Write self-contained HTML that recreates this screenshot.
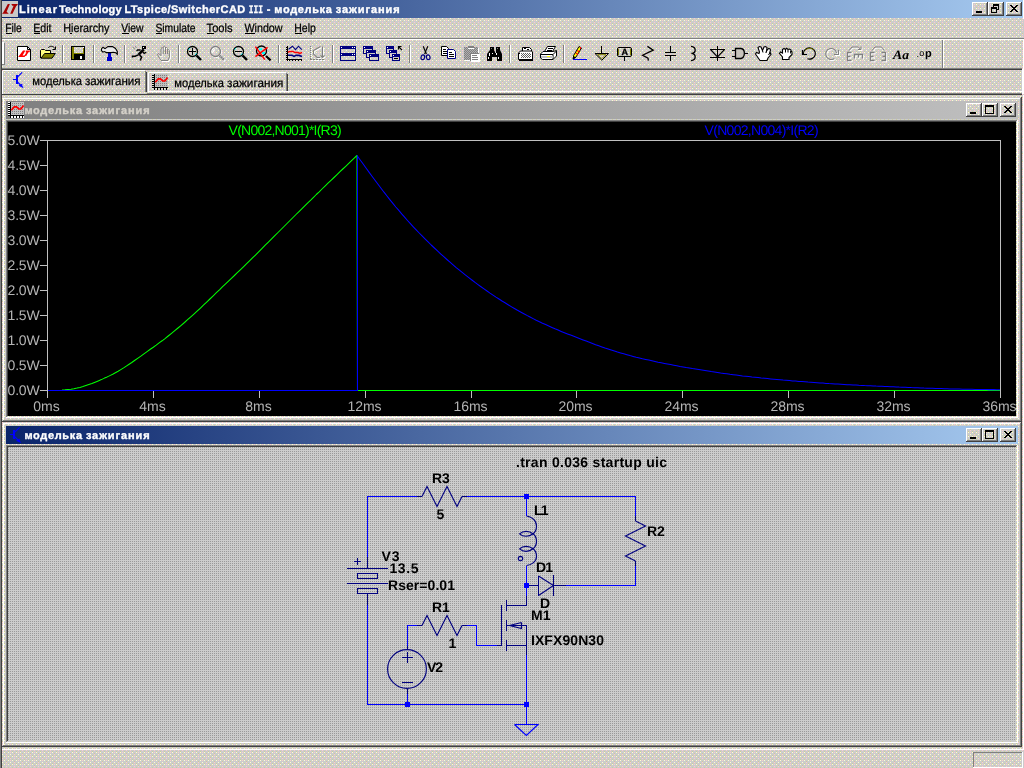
<!DOCTYPE html>
<html lang="ru"><head><meta charset="utf-8"><title>Linear Technology LTspice/SwitcherCAD III - моделька зажигания</title>
<style>
html,body{margin:0;padding:0;background:#d4d0c8}
body{width:1024px;height:768px;overflow:hidden;position:relative}
svg{position:absolute;left:0;top:0;display:block;will-change:transform}
svg text{font-family:"Liberation Sans",sans-serif;white-space:pre;text-rendering:geometricPrecision}
.ce{shape-rendering:crispEdges}
</style></head><body>
<svg width="1024" height="768" viewBox="0 0 1024 768">
<defs>
<linearGradient id="ga" x1="0" x2="1" y1="0" y2="0"><stop offset="0" stop-color="#0a246a"/><stop offset="1" stop-color="#a6caf0"/></linearGradient>
<linearGradient id="gi" x1="0" x2="1" y1="0" y2="0"><stop offset="0" stop-color="#808080"/><stop offset="1" stop-color="#c0c0c0"/></linearGradient>
<pattern id="bgp" width="8" height="8" patternUnits="userSpaceOnUse" shape-rendering="crispEdges"><rect width="8" height="8" fill="#cccccc"/><rect x="0" y="0" width="1" height="1" fill="#ffffcc"/><rect x="4" y="0" width="1" height="1" fill="#ffffcc"/><rect x="2" y="0" width="1" height="1" fill="#ffcccc"/><rect x="6" y="1" width="1" height="1" fill="#cccc99"/><rect x="2" y="2" width="1" height="1" fill="#ffffcc"/><rect x="6" y="2" width="1" height="1" fill="#ffcccc"/><rect x="0" y="3" width="1" height="1" fill="#cccc99"/><rect x="4" y="3" width="1" height="1" fill="#cccc99"/><rect x="0" y="4" width="1" height="1" fill="#ffffcc"/><rect x="4" y="4" width="1" height="1" fill="#ffffcc"/><rect x="6" y="4" width="1" height="1" fill="#ffcccc"/><rect x="2" y="5" width="1" height="1" fill="#cccc99"/><rect x="2" y="6" width="1" height="1" fill="#ffcccc"/><rect x="6" y="6" width="1" height="1" fill="#ffcccc"/><rect x="0" y="7" width="1" height="1" fill="#cccc99"/><rect x="4" y="7" width="1" height="1" fill="#cccc99"/></pattern><pattern id="scp" width="2" height="2" patternUnits="userSpaceOnUse" shape-rendering="crispEdges"><rect width="2" height="2" fill="#cccccc"/><rect x="0" y="1" width="1" height="1" fill="#999999"/></pattern><pattern id="gck" width="2" height="2" patternUnits="userSpaceOnUse" shape-rendering="crispEdges"><rect width="2" height="2" fill="#808080"/><rect x="0" y="0" width="1" height="1" fill="#b0b0b0"/><rect x="1" y="1" width="1" height="1" fill="#b0b0b0"/></pattern><pattern id="gck2" width="2" height="2" patternUnits="userSpaceOnUse" shape-rendering="crispEdges"><rect width="2" height="2" fill="#fff"/><rect x="0" y="0" width="1" height="1" fill="#606060"/><rect x="1" y="1" width="1" height="1" fill="#606060"/></pattern>
</defs>
<g class="ce">
<rect x="0" y="0" width="1024" height="768" fill="url(#bgp)"/>

<rect x="0" y="0" width="1" height="768" fill="#808080"/>
<rect x="1" y="0" width="1" height="768" fill="#404040"/>
<rect x="2" y="0" width="1021" height="18" fill="url(#ga)"/>
<rect x="1023" y="0" width="1" height="19" fill="#ffffff"/>
<rect x="972" y="2" width="16" height="14" fill="url(#bgp)"/>
<rect x="972" y="2" width="15" height="1" fill="#ffffff"/>
<rect x="972" y="2" width="1" height="13" fill="#ffffff"/>
<rect x="972" y="15" width="16" height="1" fill="#404040"/>
<rect x="987" y="2" width="1" height="14" fill="#404040"/>
<rect x="973" y="14" width="14" height="1" fill="#808080"/>
<rect x="986" y="3" width="1" height="12" fill="#808080"/>
<rect x="976" y="11" width="6" height="2" fill="#000"/>
<rect x="988" y="2" width="16" height="14" fill="url(#bgp)"/>
<rect x="988" y="2" width="15" height="1" fill="#ffffff"/>
<rect x="988" y="2" width="1" height="13" fill="#ffffff"/>
<rect x="988" y="15" width="16" height="1" fill="#404040"/>
<rect x="1003" y="2" width="1" height="14" fill="#404040"/>
<rect x="989" y="14" width="14" height="1" fill="#808080"/>
<rect x="1002" y="3" width="1" height="12" fill="#808080"/>
<rect x="993" y="4" width="6" height="6" fill="#000"/>
<rect x="994" y="6" width="4" height="3" fill="url(#bgp)"/>
<rect x="991" y="7" width="6" height="6" fill="#000"/>
<rect x="992" y="9" width="4" height="3" fill="url(#bgp)"/>
<rect x="1006" y="2" width="16" height="14" fill="url(#bgp)"/>
<rect x="1006" y="2" width="15" height="1" fill="#ffffff"/>
<rect x="1006" y="2" width="1" height="13" fill="#ffffff"/>
<rect x="1006" y="15" width="16" height="1" fill="#404040"/>
<rect x="1021" y="2" width="1" height="14" fill="#404040"/>
<rect x="1007" y="14" width="14" height="1" fill="#808080"/>
<rect x="1020" y="3" width="1" height="12" fill="#808080"/>
<rect x="1010" y="5" width="2" height="1" fill="#000"/>
<rect x="1016" y="5" width="2" height="1" fill="#000"/>
<rect x="1011" y="6" width="2" height="1" fill="#000"/>
<rect x="1015" y="6" width="2" height="1" fill="#000"/>
<rect x="1012" y="7" width="4" height="1" fill="#000"/>
<rect x="1013" y="8" width="2" height="1" fill="#000"/>
<rect x="1012" y="9" width="4" height="1" fill="#000"/>
<rect x="1011" y="10" width="2" height="1" fill="#000"/>
<rect x="1015" y="10" width="2" height="1" fill="#000"/>
<rect x="1010" y="11" width="2" height="1" fill="#000"/>
<rect x="1016" y="11" width="2" height="1" fill="#000"/>
<rect x="2" y="1" width="16" height="16" fill="#c8c8c8"/></g><g><path d="M7.8 4H9.9L6.6 11.7L8.8 13.7H2.1L3.4 12.3Z" fill="#a80000"/><path d="M11.3 4H18L16.8 5.7H16.3L12.5 13.7H10.2L13.6 5.7H12.3Z" fill="#a80000"/></g><g class="ce">
<rect x="2" y="38" width="1022" height="1" fill="#808080"/>
<rect x="2" y="39" width="1022" height="1" fill="#ffffff"/>
<rect x="2" y="42" width="1" height="22" fill="#ffffff"/>
<rect x="3" y="42" width="1" height="22" fill="#ffffff"/>
<rect x="4" y="43" width="1" height="22" fill="#808080"/>
<rect x="2" y="64" width="3" height="1" fill="#808080"/>
<rect x="62" y="45" width="1" height="18" fill="#808080"/>
<rect x="63" y="45" width="1" height="18" fill="#ffffff"/>
<rect x="93" y="45" width="1" height="18" fill="#808080"/>
<rect x="94" y="45" width="1" height="18" fill="#ffffff"/>
<rect x="124" y="45" width="1" height="18" fill="#808080"/>
<rect x="125" y="45" width="1" height="18" fill="#ffffff"/>
<rect x="178" y="45" width="1" height="18" fill="#808080"/>
<rect x="179" y="45" width="1" height="18" fill="#ffffff"/>
<rect x="278" y="45" width="1" height="18" fill="#808080"/>
<rect x="279" y="45" width="1" height="18" fill="#ffffff"/>
<rect x="332" y="45" width="1" height="18" fill="#808080"/>
<rect x="333" y="45" width="1" height="18" fill="#ffffff"/>
<rect x="409" y="45" width="1" height="18" fill="#808080"/>
<rect x="410" y="45" width="1" height="18" fill="#ffffff"/>
<rect x="509" y="45" width="1" height="18" fill="#808080"/>
<rect x="510" y="45" width="1" height="18" fill="#ffffff"/>
<rect x="563" y="45" width="1" height="18" fill="#808080"/>
<rect x="564" y="45" width="1" height="18" fill="#ffffff"/>
<rect x="942" y="40" width="1" height="28" fill="#808080"/>
<rect x="943" y="40" width="1" height="28" fill="#ffffff"/>
<rect x="2" y="68" width="1020" height="1" fill="#808080"/>
<rect x="2" y="69" width="1020" height="1" fill="#404040"/>
<rect x="1022" y="69" width="1" height="25" fill="#ffffff"/>
<rect x="1023" y="40" width="1" height="54" fill="#ffffff"/>
<rect x="2" y="91" width="1020" height="1" fill="#ffffff"/>
<rect x="148" y="72" width="140" height="19" fill="url(#bgp)"/>
<rect x="149" y="72" width="137" height="1" fill="#ffffff"/>
<rect x="148" y="73" width="1" height="18" fill="#ffffff"/>
<rect x="286" y="73" width="1" height="18" fill="#808080"/>
<rect x="287" y="74" width="1" height="17" fill="#404040"/>
<rect x="2" y="70" width="146" height="24" fill="url(#bgp)"/>
<rect x="3" y="70" width="142" height="1" fill="#ffffff"/>
<rect x="2" y="71" width="1" height="23" fill="#ffffff"/>
<rect x="145" y="71" width="1" height="22" fill="#808080"/>
<rect x="146" y="72" width="1" height="21" fill="#404040"/>
<rect x="2" y="93" width="1020" height="1" fill="#808080"/>
<rect x="2" y="94" width="1020" height="1" fill="#404040"/>
<rect x="2" y="92" width="145" height="2" fill="url(#bgp)"/>
<rect x="2" y="92" width="1" height="2" fill="#ffffff"/>
<rect x="147" y="93" width="875" height="1" fill="#808080"/>
<rect x="2" y="97" width="1020" height="325" fill="url(#bgp)"/>
<rect x="3" y="98" width="1018" height="1" fill="#ffffff"/>
<rect x="3" y="98" width="1" height="323" fill="#ffffff"/>
<rect x="2" y="421" width="1020" height="1" fill="#404040"/>
<rect x="1021" y="97" width="1" height="325" fill="#404040"/>
<rect x="3" y="420" width="1018" height="1" fill="#808080"/>
<rect x="1020" y="98" width="1" height="323" fill="#808080"/>
<rect x="6" y="101" width="1012" height="18" fill="url(#gi)"/>
<rect x="966" y="103" width="16" height="14" fill="url(#bgp)"/>
<rect x="966" y="103" width="15" height="1" fill="#ffffff"/>
<rect x="966" y="103" width="1" height="13" fill="#ffffff"/>
<rect x="966" y="116" width="16" height="1" fill="#404040"/>
<rect x="981" y="103" width="1" height="14" fill="#404040"/>
<rect x="967" y="115" width="14" height="1" fill="#808080"/>
<rect x="980" y="104" width="1" height="12" fill="#808080"/>
<rect x="970" y="112" width="6" height="2" fill="#000"/>
<rect x="982" y="103" width="16" height="14" fill="url(#bgp)"/>
<rect x="982" y="103" width="15" height="1" fill="#ffffff"/>
<rect x="982" y="103" width="1" height="13" fill="#ffffff"/>
<rect x="982" y="116" width="16" height="1" fill="#404040"/>
<rect x="997" y="103" width="1" height="14" fill="#404040"/>
<rect x="983" y="115" width="14" height="1" fill="#808080"/>
<rect x="996" y="104" width="1" height="12" fill="#808080"/>
<rect x="985" y="105" width="9" height="9" fill="#000"/>
<rect x="986" y="107" width="7" height="6" fill="url(#bgp)"/>
<rect x="1000" y="103" width="16" height="14" fill="url(#bgp)"/>
<rect x="1000" y="103" width="15" height="1" fill="#ffffff"/>
<rect x="1000" y="103" width="1" height="13" fill="#ffffff"/>
<rect x="1000" y="116" width="16" height="1" fill="#404040"/>
<rect x="1015" y="103" width="1" height="14" fill="#404040"/>
<rect x="1001" y="115" width="14" height="1" fill="#808080"/>
<rect x="1014" y="104" width="1" height="12" fill="#808080"/>
<rect x="1004" y="106" width="2" height="1" fill="#000"/>
<rect x="1010" y="106" width="2" height="1" fill="#000"/>
<rect x="1005" y="107" width="2" height="1" fill="#000"/>
<rect x="1009" y="107" width="2" height="1" fill="#000"/>
<rect x="1006" y="108" width="4" height="1" fill="#000"/>
<rect x="1007" y="109" width="2" height="1" fill="#000"/>
<rect x="1006" y="110" width="4" height="1" fill="#000"/>
<rect x="1005" y="111" width="2" height="1" fill="#000"/>
<rect x="1009" y="111" width="2" height="1" fill="#000"/>
<rect x="1004" y="112" width="2" height="1" fill="#000"/>
<rect x="1010" y="112" width="2" height="1" fill="#000"/>
<rect x="6" y="120" width="1012" height="1" fill="#808080"/>
<rect x="6" y="120" width="1" height="298" fill="#808080"/>
<rect x="7" y="121" width="1010" height="1" fill="#404040"/>
<rect x="7" y="121" width="1" height="296" fill="#404040"/>
<rect x="6" y="417" width="1012" height="1" fill="#ffffff"/>
<rect x="1017" y="120" width="1" height="298" fill="#ffffff"/>
<rect x="7" y="416" width="1010" height="1" fill="url(#bgp)"/>
<rect x="1016" y="121" width="1" height="296" fill="url(#bgp)"/>
<rect x="8" y="122" width="1008" height="294" fill="#000"/>
<rect x="2" y="422" width="1020" height="325" fill="url(#bgp)"/>
<rect x="3" y="423" width="1018" height="1" fill="#ffffff"/>
<rect x="3" y="423" width="1" height="323" fill="#ffffff"/>
<rect x="2" y="746" width="1020" height="1" fill="#404040"/>
<rect x="1021" y="422" width="1" height="325" fill="#404040"/>
<rect x="3" y="745" width="1018" height="1" fill="#808080"/>
<rect x="1020" y="423" width="1" height="323" fill="#808080"/>
<rect x="6" y="426" width="1012" height="18" fill="url(#ga)"/>
<rect x="966" y="428" width="16" height="14" fill="url(#bgp)"/>
<rect x="966" y="428" width="15" height="1" fill="#ffffff"/>
<rect x="966" y="428" width="1" height="13" fill="#ffffff"/>
<rect x="966" y="441" width="16" height="1" fill="#404040"/>
<rect x="981" y="428" width="1" height="14" fill="#404040"/>
<rect x="967" y="440" width="14" height="1" fill="#808080"/>
<rect x="980" y="429" width="1" height="12" fill="#808080"/>
<rect x="970" y="437" width="6" height="2" fill="#000"/>
<rect x="982" y="428" width="16" height="14" fill="url(#bgp)"/>
<rect x="982" y="428" width="15" height="1" fill="#ffffff"/>
<rect x="982" y="428" width="1" height="13" fill="#ffffff"/>
<rect x="982" y="441" width="16" height="1" fill="#404040"/>
<rect x="997" y="428" width="1" height="14" fill="#404040"/>
<rect x="983" y="440" width="14" height="1" fill="#808080"/>
<rect x="996" y="429" width="1" height="12" fill="#808080"/>
<rect x="985" y="430" width="9" height="9" fill="#000"/>
<rect x="986" y="432" width="7" height="6" fill="url(#bgp)"/>
<rect x="1000" y="428" width="16" height="14" fill="url(#bgp)"/>
<rect x="1000" y="428" width="15" height="1" fill="#ffffff"/>
<rect x="1000" y="428" width="1" height="13" fill="#ffffff"/>
<rect x="1000" y="441" width="16" height="1" fill="#404040"/>
<rect x="1015" y="428" width="1" height="14" fill="#404040"/>
<rect x="1001" y="440" width="14" height="1" fill="#808080"/>
<rect x="1014" y="429" width="1" height="12" fill="#808080"/>
<rect x="1004" y="431" width="2" height="1" fill="#000"/>
<rect x="1010" y="431" width="2" height="1" fill="#000"/>
<rect x="1005" y="432" width="2" height="1" fill="#000"/>
<rect x="1009" y="432" width="2" height="1" fill="#000"/>
<rect x="1006" y="433" width="4" height="1" fill="#000"/>
<rect x="1007" y="434" width="2" height="1" fill="#000"/>
<rect x="1006" y="435" width="4" height="1" fill="#000"/>
<rect x="1005" y="436" width="2" height="1" fill="#000"/>
<rect x="1009" y="436" width="2" height="1" fill="#000"/>
<rect x="1004" y="437" width="2" height="1" fill="#000"/>
<rect x="1010" y="437" width="2" height="1" fill="#000"/>
<rect x="6" y="445" width="1012" height="1" fill="#808080"/>
<rect x="6" y="445" width="1" height="298" fill="#808080"/>
<rect x="7" y="446" width="1010" height="1" fill="#404040"/>
<rect x="7" y="446" width="1" height="296" fill="#404040"/>
<rect x="6" y="742" width="1012" height="1" fill="#ffffff"/>
<rect x="1017" y="445" width="1" height="298" fill="#ffffff"/>
<rect x="7" y="741" width="1010" height="1" fill="url(#bgp)"/>
<rect x="1016" y="446" width="1" height="296" fill="url(#bgp)"/>
<rect x="8" y="447" width="1008" height="294" fill="url(#scp)"/>

<rect x="1022" y="95" width="1" height="654" fill="url(#bgp)"/>
<rect x="1023" y="95" width="1" height="654" fill="#ffffff"/>
<rect x="2" y="749" width="1022" height="1" fill="#ffffff"/>
<rect x="973" y="752" width="49" height="1" fill="#808080"/>
<rect x="973" y="752" width="1" height="15" fill="#808080"/>
<rect x="973" y="767" width="50" height="1" fill="#ffffff"/>
<rect x="1022" y="752" width="1" height="16" fill="#ffffff"/>
</g>
<g>
<text x="18.9" y="13" font-size="11" fill="#fff" textLength="38.1" lengthAdjust="spacing" font-weight="bold" stroke="#fff" stroke-width="0.35">Linear</text>
<text x="58.9" y="13" font-size="11" fill="#fff" textLength="62.7" lengthAdjust="spacing" font-weight="bold" stroke="#fff" stroke-width="0.35">Technology</text>
<text x="124.4" y="13" font-size="11" fill="#fff" textLength="120.9" lengthAdjust="spacing" font-weight="bold" stroke="#fff" stroke-width="0.35">LTspice/SwitcherCAD</text>
<text x="266.7" y="13" font-size="11" fill="#fff" textLength="5.7" lengthAdjust="spacing" font-weight="bold" stroke="#fff" stroke-width="0.35">-</text>
<text x="274.3" y="13" font-size="11" fill="#fff" textLength="57.6" lengthAdjust="spacing" font-weight="bold" stroke="#fff" stroke-width="0.35">моделька</text>
<text x="335.8" y="13" font-size="11" fill="#fff" textLength="63.8" lengthAdjust="spacing" font-weight="bold" stroke="#fff" stroke-width="0.35">зажигания</text>
<text x="248.7" y="13" font-size="11.5" fill="#fff" textLength="14.3" lengthAdjust="spacingAndGlyphs" font-weight="bold" style="font-family:'Liberation Mono',monospace" stroke="#fff" stroke-width="0.3">III</text>
<text x="5.2" y="32" font-size="12" fill="#000" textLength="16.7" lengthAdjust="spacingAndGlyphs" stroke="#000" stroke-width="0.25">File</text>
<text x="33.2" y="32" font-size="12" fill="#000" textLength="18.3" lengthAdjust="spacingAndGlyphs" stroke="#000" stroke-width="0.25">Edit</text>
<text x="63.2" y="32" font-size="12" fill="#000" textLength="46.3" lengthAdjust="spacingAndGlyphs" stroke="#000" stroke-width="0.25">Hierarchy</text>
<text x="121.2" y="32" font-size="12" fill="#000" textLength="22.2" lengthAdjust="spacingAndGlyphs" stroke="#000" stroke-width="0.25">View</text>
<text x="155.4" y="32" font-size="12" fill="#000" textLength="40.2" lengthAdjust="spacingAndGlyphs" stroke="#000" stroke-width="0.25">Simulate</text>
<text x="206.6" y="32" font-size="12" fill="#000" textLength="26.0" lengthAdjust="spacingAndGlyphs" stroke="#000" stroke-width="0.25">Tools</text>
<text x="244.4" y="32" font-size="12" fill="#000" textLength="38.2" lengthAdjust="spacingAndGlyphs" stroke="#000" stroke-width="0.25">Window</text>
<text x="294.3" y="32" font-size="12" fill="#000" textLength="21.5" lengthAdjust="spacingAndGlyphs" stroke="#000" stroke-width="0.25">Help</text>
<text x="32.2" y="85" font-size="12" fill="#000" textLength="49.9" lengthAdjust="spacingAndGlyphs" stroke="#000" stroke-width="0.25">моделька</text>
<text x="85.0" y="85" font-size="12" fill="#000" textLength="55.6" lengthAdjust="spacingAndGlyphs" stroke="#000" stroke-width="0.25">зажигания</text>
<text x="174.3" y="87" font-size="12" fill="#000" textLength="49.6" lengthAdjust="spacingAndGlyphs" stroke="#000" stroke-width="0.25">моделька</text>
<text x="227.1" y="87" font-size="12" fill="#000" textLength="56.2" lengthAdjust="spacingAndGlyphs" stroke="#000" stroke-width="0.25">зажигания</text>
<text x="24.4" y="114" font-size="11" fill="#d4d0c8" textLength="57.6" lengthAdjust="spacing" font-weight="bold" stroke="#d4d0c8" stroke-width="0.35">моделька</text>
<text x="85.9" y="114" font-size="11" fill="#d4d0c8" textLength="63.7" lengthAdjust="spacing" font-weight="bold" stroke="#d4d0c8" stroke-width="0.35">зажигания</text>
<text x="24.4" y="439" font-size="11" fill="#fff" textLength="57.6" lengthAdjust="spacing" font-weight="bold" stroke="#fff" stroke-width="0.35">моделька</text>
<text x="85.9" y="439" font-size="11" fill="#fff" textLength="63.7" lengthAdjust="spacing" font-weight="bold" stroke="#fff" stroke-width="0.35">зажигания</text>
</g>
<g class="ce" fill="#000">
<rect x="6" y="33" width="6" height="1"/>
<rect x="34" y="33" width="6" height="1"/>
<rect x="70" y="33" width="2" height="1"/>
<rect x="122" y="33" width="7" height="1"/>
<rect x="156" y="33" width="6" height="1"/>
<rect x="207" y="33" width="7" height="1"/>
<rect x="245" y="33" width="10" height="1"/>
<rect x="295" y="33" width="7" height="1"/>
</g>
<g class="ce"><g transform="translate(0 0)"><rect x="13" y="430" width="2" height="9" fill="#0000ff"/><rect x="10" y="434" width="3" height="1" fill="#0000ff"/></g>
<g transform="translate(2.5 -355)"><rect x="13" y="430" width="2" height="9" fill="#0000ff"/><rect x="10" y="434" width="3" height="1" fill="#0000ff"/></g></g>
<g><path d="M17.5 46.5H27.5L30.5 49.5V60.5H17.5Z" stroke="#000" stroke-width="1" fill="#fff"/>
<path d="M27.5 46.5V49.5H30.5" stroke="#000" stroke-width="1" fill="none"/>
<path d="M23 50.6H25.4L22.6 55.4H25.6L24.6 57H18.2Z" stroke="#ff0000" stroke-width="0" fill="#ff0000"/>
<path d="M26.2 50.6H30.2L29.4 52.2H28.4L26.2 56H24.2L26.4 52.2H25.4Z" stroke="#ff0000" stroke-width="0" fill="#ff0000"/>
<path d="M40.5 58V50.5L41.5 49.5H44.5L45.5 50.5H50.5V53" stroke="#000" stroke-width="1" fill="#ffff80"/>
<path d="M41 58.2L44.6 53.5H55.3L52 58.2Z" stroke="#000" stroke-width="1" fill="#808000"/>
<path d="M48.3 47.8C49.5 45.8 53.5 45.6 54.8 48.5" stroke="#000" stroke-width="1" fill="none"/>
<path d="M52.5 49.5H55.5V46.5" stroke="#000" stroke-width="1" fill="none"/>
<rect class="ce" x="71" y="46" width="14" height="14" fill="#000"/>
<rect class="ce" x="72" y="47" width="12" height="12" fill="#808000"/>
<rect class="ce" x="74" y="47" width="9" height="6" fill="url(#bgp)"/>
<rect class="ce" x="83" y="47" width="1" height="1" fill="#fff"/>
<rect class="ce" x="74" y="54" width="10" height="5" fill="#000"/>
<rect class="ce" x="80" y="56" width="2" height="3" fill="#fff"/>
<rect class="ce" x="108" y="52" width="3" height="5" fill="#0000d0"/>
<rect class="ce" x="107" y="57" width="5" height="4" fill="#0000d0"/>
<path d="M101.5 48.8L103 47.2L105 48.6L108 46.6H112.5L115.5 48.5L117.3 51.5V54.2L115.8 52.8L113.5 52.2L111 52.6H106.5L104.2 51.6L102.8 52.2L101.5 50.6Z" stroke="#000" stroke-width="1.1" fill="#e8e8e8"/>
<rect class="ce" x="142" y="46" width="4" height="3" fill="#000"/>
<rect class="ce" x="143" y="47" width="1" height="1" fill="#fff"/>
<path d="M143.8 49.3L138.6 54.6" stroke="#000" stroke-width="2.6" fill="none"/>
<path d="M140.6 50L137.6 49.9L136.6 51" stroke="#000" stroke-width="1.3" fill="none"/>
<path d="M142.8 52L144.2 53.4L146.2 52.2" stroke="#000" stroke-width="1.3" fill="none"/>
<path d="M138.8 54.6L135.2 56.3L132.5 56.3L132.5 57.6" stroke="#000" stroke-width="1.5" fill="none"/>
<path d="M139.6 55L141.6 57.2L140.6 59.4L140.4 60.6" stroke="#000" stroke-width="1.5" fill="none"/>
<path d="M132.8 47.2L134.8 49" stroke="#808080" stroke-width="1" fill="none"/>
<path d="M135 46.3L136.6 47.8" stroke="#808080" stroke-width="1" fill="none"/>
<path d="M161 60.5L157.5 54.5L158.8 53.5L161 55.8V48.5L162.2 47.5L163.2 48.5V47L164.4 46.2L165.5 47V48L166.6 47.4L167.6 48.4V49.8L168.6 49.6L169.4 50.6V57L168 60.5Z" stroke="#fff" stroke-width="1" fill="none" transform="translate(1 1)"/>
<path d="M161 60.5L157.5 54.5L158.8 53.5L161 55.8V48.5L162.2 47.5L163.2 48.5V47L164.4 46.2L165.5 47V48L166.6 47.4L167.6 48.4V49.8L168.6 49.6L169.4 50.6V57L168 60.5Z" stroke="#808080" stroke-width="1" fill="none"/>
<path d="M163.2 48.5V54M165.5 48V54M167.6 49.8V54" stroke="#808080" stroke-width="1" fill="none"/>
<circle cx="192.5" cy="51.5" r="5" stroke="#000" stroke-width="1.3" fill="none"/>
<path d="M188.6 49.6A4 4 0 0 1 190.2 48M196.4 53.4A4 4 0 0 1 194.8 55" stroke="#00ffff" stroke-width="1" fill="none"/>
<rect class="ce" x="189" y="51" width="7" height="1" fill="#000"/>
<rect class="ce" x="192" y="48" width="1" height="7" fill="#000"/>
<path d="M196.5 55.5L201 60" stroke="#000" stroke-width="2.4" fill="none"/>
<circle cx="216.3" cy="52.3" r="5" stroke="#fff" stroke-width="1.2" fill="none"/>
<circle cx="215.5" cy="51.5" r="5" stroke="#808080" stroke-width="1.3" fill="none"/>
<path d="M212.4 52.6L214.6 49.4" stroke="#fff" stroke-width="1.2" fill="none"/>
<path d="M220.4 56.6L225 61.2" stroke="#fff" stroke-width="2.4" fill="none"/>
<path d="M219.6 55.6L224.2 60.2" stroke="#808080" stroke-width="2.4" fill="none"/>
<path d="M220.2 57.2L221.8 55.6M221.8 58.8L223.4 57.2M223.4 60.4L225 58.8" stroke="#fff" stroke-width="0.7" fill="none"/>
<circle cx="238.5" cy="51.5" r="5" stroke="#000" stroke-width="1.3" fill="none"/>
<path d="M234.6 49.6A4 4 0 0 1 236.2 48M242.4 53.4A4 4 0 0 1 240.8 55" stroke="#00ffff" stroke-width="1" fill="none"/>
<rect class="ce" x="235" y="51" width="7" height="1" fill="#000"/>
<path d="M242.5 55.5L247 60" stroke="#000" stroke-width="2.4" fill="none"/>
<circle cx="261.5" cy="51" r="5" stroke="#000" stroke-width="1.3" fill="none"/>
<path d="M259 48.2h3v2h-3zM262 52h3v2h-3z" stroke="#00ffff" stroke-width="0" fill="#00ffff"/>
<path d="M266 56L270.6 60.4" stroke="#000" stroke-width="2.2" fill="none"/>
<path d="M255.4 46.6L264.8 59.6" stroke="#ff0000" stroke-width="1.5" fill="none"/>
<path d="M267.6 47.3L255.4 56.6" stroke="#ff0000" stroke-width="1.5" fill="none"/>
<rect class="ce" x="287" y="46" width="1" height="15" fill="#000"/>
<rect class="ce" x="286" y="59" width="16" height="1" fill="#000"/>
<rect class="ce" x="286" y="47" width="1" height="1" fill="#000"/>
<rect class="ce" x="286" y="49" width="1" height="1" fill="#000"/>
<rect class="ce" x="286" y="51" width="1" height="1" fill="#000"/>
<rect class="ce" x="286" y="53" width="1" height="1" fill="#000"/>
<rect class="ce" x="286" y="55" width="1" height="1" fill="#000"/>
<rect class="ce" x="286" y="57" width="1" height="1" fill="#000"/>
<rect class="ce" x="289" y="60" width="1" height="1" fill="#000"/>
<rect class="ce" x="292" y="60" width="1" height="1" fill="#000"/>
<rect class="ce" x="295" y="60" width="1" height="1" fill="#000"/>
<rect class="ce" x="298" y="60" width="1" height="1" fill="#000"/>
<rect class="ce" x="301" y="60" width="1" height="1" fill="#000"/>
<path d="M288.5 49.3L292.5 46.2L295.5 49.6L298.5 46.2L301.8 49.6" stroke="#000080" stroke-width="1.1" fill="none"/>
<path d="M288 52.2L290 51.4L293 51.4L295 52.6L298 52.6L300 53.4L302 52.4" stroke="#ff0000" stroke-width="1.5" fill="none"/>
<path d="M288 55.3L292 55.3L294 56.4L296 55.4L299 55.4L302 56.4" stroke="#000080" stroke-width="1.6" fill="none"/>
<path d="M310.5 46V60" stroke="#fff" stroke-width="1" fill="none" transform="translate(1 1)" stroke-dasharray="1 1"/>
<path d="M310 59.5H325" stroke="#fff" stroke-width="1" fill="none" transform="translate(1 1)" stroke-dasharray="2 1"/>
<path d="M320.5 46.5L313.5 50.5V54L317 57.5H320" stroke="#fff" stroke-width="1.1" fill="none" transform="translate(1 1)"/>
<path d="M322.5 46.5V57.5M320.5 55.5L322.5 57.5L324.5 55.5" stroke="#fff" stroke-width="1.1" fill="none" transform="translate(1 1)"/>
<path d="M310.5 46V60" stroke="#808080" stroke-width="1" fill="none" transform="translate(0 0)" stroke-dasharray="1 1"/>
<path d="M310 59.5H325" stroke="#808080" stroke-width="1" fill="none" transform="translate(0 0)" stroke-dasharray="2 1"/>
<path d="M320.5 46.5L313.5 50.5V54L317 57.5H320" stroke="#808080" stroke-width="1.1" fill="none" transform="translate(0 0)"/>
<path d="M322.5 46.5V57.5M320.5 55.5L322.5 57.5L324.5 55.5" stroke="#808080" stroke-width="1.1" fill="none" transform="translate(0 0)"/>
<rect class="ce" x="340" y="46" width="16" height="15" fill="#000080"/>
<rect class="ce" x="341" y="49" width="14" height="4" fill="url(#bgp)"/>
<rect class="ce" x="341" y="56" width="14" height="4" fill="url(#bgp)"/>
<rect class="ce" x="341" y="47" width="1" height="1" fill="#fff"/>
<rect class="ce" x="352" y="47" width="1" height="1" fill="#fff"/>
<rect class="ce" x="354" y="47" width="1" height="1" fill="#fff"/>
<rect class="ce" x="341" y="54" width="1" height="1" fill="#fff"/>
<rect class="ce" x="352" y="54" width="1" height="1" fill="#fff"/>
<rect class="ce" x="354" y="54" width="1" height="1" fill="#fff"/>
<rect class="ce" x="363" y="46" width="10" height="8" fill="#000080"/>
<rect class="ce" x="364" y="49" width="8" height="4" fill="url(#bgp)"/>
<rect class="ce" x="364" y="47" width="1" height="1" fill="#fff"/>
<rect class="ce" x="366" y="50" width="10" height="8" fill="#000080"/>
<rect class="ce" x="367" y="53" width="8" height="4" fill="url(#bgp)"/>
<rect class="ce" x="367" y="51" width="1" height="1" fill="#fff"/>
<rect class="ce" x="369" y="54" width="10" height="7" fill="#000080"/>
<rect class="ce" x="370" y="57" width="8" height="3" fill="url(#bgp)"/>
<rect class="ce" x="370" y="55" width="1" height="1" fill="#fff"/>
<rect class="ce" x="386" y="46" width="8" height="8" fill="#000080"/>
<rect class="ce" x="387" y="49" width="6" height="4" fill="url(#bgp)"/>
<rect class="ce" x="387" y="47" width="1" height="1" fill="#fff"/>
<rect class="ce" x="389" y="50" width="8" height="8" fill="#000080"/>
<rect class="ce" x="390" y="53" width="6" height="4" fill="url(#bgp)"/>
<rect class="ce" x="390" y="51" width="1" height="1" fill="#fff"/>
<rect class="ce" x="392" y="54" width="8" height="7" fill="#000080"/>
<rect class="ce" x="393" y="57" width="6" height="3" fill="url(#bgp)"/>
<rect class="ce" x="393" y="55" width="1" height="1" fill="#fff"/>
<rect class="ce" x="394" y="58" width="4" height="1" fill="#000"/>
<path d="M398 46.5H401.5M398.5 46V49.5M398.8 46.8L402 50.2" stroke="#000" stroke-width="1.2" fill="none"/>
<path d="M423.2 46.2L426.4 54" stroke="#000" stroke-width="1.15" fill="none"/>
<path d="M427.8 46.2L424.6 54" stroke="#000" stroke-width="1.15" fill="none"/>
<ellipse cx="422.8" cy="57.2" rx="1.8" ry="2.4" stroke="#000080" stroke-width="1.2" fill="none" transform="rotate(12 422.8 57.2)"/>
<ellipse cx="428.2" cy="57.2" rx="1.8" ry="2.4" stroke="#000080" stroke-width="1.2" fill="none" transform="rotate(-12 428.2 57.2)"/>
<path d="M441.5 46.5H446.5L448.5 48.5V55.5H441.5Z" stroke="#000" stroke-width="1" fill="#fff"/>
<rect class="ce" x="443" y="49" width="3" height="1" fill="#000"/>
<rect class="ce" x="443" y="51" width="4" height="1" fill="#000"/>
<rect class="ce" x="443" y="53" width="4" height="1" fill="#000"/>
<path d="M447.5 49.5H453.5L455.5 51.5V58.5H447.5Z" stroke="#000080" stroke-width="1" fill="#fff"/>
<rect class="ce" x="449" y="52" width="3" height="1" fill="#000"/>
<rect class="ce" x="449" y="54" width="5" height="1" fill="#000"/>
<rect class="ce" x="449" y="56" width="5" height="1" fill="#000"/>
<rect class="ce" x="465" y="48" width="14" height="13" rx="1" fill="#fff"/>
<rect class="ce" x="464" y="47" width="14" height="13" rx="1" fill="url(#gck)"/>
<rect class="ce" x="468" y="46" width="6" height="2" fill="#808080"/>
<rect class="ce" x="468" y="48" width="6" height="1" fill="#fff"/>
<rect class="ce" x="471" y="54" width="9" height="8" fill="#fff"/>
<rect class="ce" x="470" y="53" width="9" height="8" fill="#fff"/>
<rect class="ce" x="470" y="53" width="1" height="8" fill="#808080"/>
<rect class="ce" x="470" y="53" width="9" height="1" fill="#808080"/>
<rect class="ce" x="472" y="55" width="5" height="1" fill="#808080"/>
<rect class="ce" x="472" y="57" width="6" height="1" fill="#808080"/>
<rect class="ce" x="472" y="59" width="6" height="1" fill="#808080"/>
<path d="M490 47H494V50L495 52V53H496V52L496 50V47H500V50L502 54V61H497V57H492V61H487V54L490 50Z" stroke="#000" stroke-width="0" fill="#000"/>
<rect class="ce" x="491" y="48" width="1" height="1" fill="#808080"/>
<rect class="ce" x="497" y="48" width="1" height="1" fill="#808080"/>
<rect class="ce" x="489" y="53" width="1" height="3" fill="#fff"/>
<rect class="ce" x="492" y="53" width="1" height="1" fill="#fff"/>
<rect class="ce" x="496" y="53" width="1" height="2" fill="#fff"/>
<rect class="ce" x="488" y="57" width="1" height="2" fill="#fff"/>
<rect class="ce" x="498" y="57" width="1" height="2" fill="#fff"/>
<path d="M522.5 51V47.5H529.5L531.5 49.5V51" stroke="#000" stroke-width="1" fill="#fff"/>
<path d="M518.5 53L520.5 51H531.5L532.5 52V59.5H518.5Z" stroke="#000" stroke-width="1" fill="#fff"/>
<rect class="ce" x="521" y="53" width="10" height="5" fill="url(#gck2)"/>
<rect class="ce" x="519" y="59" width="14" height="2" fill="#000"/>
<rect class="ce" x="524" y="48" width="2" height="1" fill="#000"/>
<rect class="ce" x="527" y="49" width="2" height="1" fill="#000"/>
<rect class="ce" x="519" y="53" width="1" height="1" fill="#000"/>
<path d="M544.5 51.5L547.5 46.5H555.5L552.5 51.5Z" stroke="#000" stroke-width="1" fill="#fff"/>
<rect class="ce" x="548" y="48" width="5" height="1" fill="#000"/>
<rect class="ce" x="547" y="50" width="5" height="1" fill="#000"/>
<path d="M540.5 54L543 51.5H553L556.5 50.5V56L553 59.5H542.5L540.5 58Z" stroke="#000" stroke-width="1" fill="#fff"/>
<path d="M540.5 54.5H553L556.5 51M553 54.5V59.5" stroke="#000" stroke-width="1" fill="none"/>
<rect class="ce" x="541" y="56" width="12" height="2" fill="#c0c0c0"/>
<rect class="ce" x="547" y="56" width="3" height="1" fill="#ffff00"/>
<path d="M579 46.5L581.5 48L576 57L573.2 59L573.6 55.5Z" stroke="#000" stroke-width="1" fill="#ffff00"/>
<path d="M577.2 50.5L579.5 52M575.8 53L578 54.5" stroke="#ff0000" stroke-width="1.2" fill="none"/>
<path d="M573.2 59L573.6 56.5L575.6 57.6Z" stroke="#000" stroke-width="0.5" fill="#000"/>
<rect class="ce" x="580" y="47" width="1" height="2" fill="#ff0000"/>
<rect class="ce" x="573" y="59" width="14" height="1" fill="#0000ff"/>
<rect class="ce" x="601" y="46" width="1" height="7" fill="#000"/>
<path d="M595 53.5H608.6L601.8 60.2Z" stroke="#000" stroke-width="1" fill="none"/>
<path d="M597.6 54.6H606L601.8 58.6Z" stroke="#808000" stroke-width="0.9" fill="none"/>
<rect x="617.5" y="47.5" width="14" height="9" rx="1.5" stroke="#000" fill="none"/>
<rect class="ce" x="618" y="49" width="1" height="6" fill="#808000"/>
<rect class="ce" x="630" y="49" width="1" height="6" fill="#808000"/>
<rect class="ce" x="624" y="57" width="1" height="4" fill="#000"/>
<text x="621.4" y="55" font-size="9" font-weight="bold" fill="#000" stroke="#000" stroke-width="0.3">A</text>
<path d="M647.4 46.4L653.2 50.2L642.6 55.2L648 58.2L648.4 60.6" stroke="#000" stroke-width="1.3" fill="none"/>
<rect class="ce" x="670" y="46" width="1" height="6" fill="#000"/>
<rect class="ce" x="665" y="52" width="11" height="1" fill="#000"/>
<rect class="ce" x="665" y="55" width="11" height="1" fill="#000"/>
<rect class="ce" x="670" y="56" width="1" height="5" fill="#000"/>
<path d="M691 46.4C696.5 47 696.5 53 691.4 53.4C696.5 54 696.5 60 691 60.6" stroke="#000" stroke-width="1.3" fill="none"/>
<rect class="ce" x="717" y="46" width="1" height="15" fill="#000"/>
<rect class="ce" x="710" y="49" width="15" height="1" fill="#000"/>
<rect class="ce" x="710" y="57" width="15" height="1" fill="#000"/>
<path d="M710.5 49.5L717.5 57L724.5 49.5" stroke="#000" stroke-width="1.1" fill="none"/>
<path d="M735.5 48.5H741C745.5 49 745.5 57.6 741 58.5H735.5Z" stroke="#000" stroke-width="1.3" fill="#c8c4bc"/>
<rect class="ce" x="732" y="50" width="3" height="1" fill="#000"/>
<rect class="ce" x="732" y="56" width="3" height="1" fill="#000"/>
<rect class="ce" x="745" y="53" width="3" height="1" fill="#000"/>
<path d="M760 60.5L755.5 54L756.5 52.5L759 53.5L759.5 52L758 47.5L759.5 46.5L761 47L762.5 50.5L764 47L765.5 46.5L767 47.5L766.5 51L768.5 48.5L770 48.8L770.5 50L769.5 53.5L770.5 53L771 54.5L768 58L767 60.5Z" stroke="#000" stroke-width="1.1" fill="#fff"/>
<path d="M762.5 50.5L763 52.5M766.5 51L766 53M769.5 53.5L768.5 55" stroke="#000" stroke-width="1" fill="none"/>
<path d="M782.5 59.5V57L779.5 53.5L780.5 52L782.5 53V49.5L784 48.5L785.5 49.5L786.5 48.3L788 49.3L789.5 49L791 50V51L792 52V54.5L789 57.5V59.5Z" stroke="#000" stroke-width="1.1" fill="#fff"/>
<path d="M785.5 49.5V52.5M788 49.5V52.5M790.6 51V53.5" stroke="#000" stroke-width="1" fill="none"/>
<path d="M803.4 54A6 5.6 0 1 1 807.4 58.8" stroke="#000" stroke-width="1.2" fill="none"/>
<path d="M802.5 50V54.5H807" stroke="#000" stroke-width="1.2" fill="none"/>
<path d="M805.4 50A6 5.6 0 0 1 813.6 49.8" stroke="#808000" stroke-width="1" fill="none"/>
<path d="M836.6 53A5.5 5.5 0 1 0 834.5 58.4" stroke="#fff" stroke-width="1.1" fill="none" transform="translate(1 1)"/>
<path d="M838.5 50V54.5H834" stroke="#fff" stroke-width="1.1" fill="none" transform="translate(1 1)"/>
<path d="M836.6 53A5.5 5.5 0 1 0 834.5 58.4" stroke="#808080" stroke-width="1.1" fill="none" transform="translate(0 0)"/>
<path d="M838.5 50V54.5H834" stroke="#808080" stroke-width="1.1" fill="none" transform="translate(0 0)"/>
<path d="M851.5 52.5H847.5V60.5H851.5M847.5 56.5H850.5" stroke="#fff" stroke-width="1.3" fill="none" transform="translate(1 1)"/>
<path d="M854.5 58.5V54.5H862.5V58.5M858.5 54.5V57.5" stroke="#fff" stroke-width="1.3" fill="none" transform="translate(1 1)"/>
<path d="M849 50.5L852 47H858.5L860.5 49.5M858 49.5H861V46.5" stroke="#fff" stroke-width="1" fill="none" transform="translate(1 1)"/>
<path d="M851.5 52.5H847.5V60.5H851.5M847.5 56.5H850.5" stroke="#808080" stroke-width="1.3" fill="none" transform="translate(0 0)"/>
<path d="M854.5 58.5V54.5H862.5V58.5M858.5 54.5V57.5" stroke="#808080" stroke-width="1.3" fill="none" transform="translate(0 0)"/>
<path d="M849 50.5L852 47H858.5L860.5 49.5M858 49.5H861V46.5" stroke="#808080" stroke-width="1" fill="none" transform="translate(0 0)"/>
<path d="M874.5 52.5H870.5V60.5H874.5M870.5 56.5H873.5" stroke="#fff" stroke-width="1.3" fill="none" transform="translate(1 1)"/>
<path d="M881.5 52.5H885.5V60.5H881.5M885.5 56.5H882.5" stroke="#fff" stroke-width="1.3" fill="none" transform="translate(1 1)"/>
<path d="M872 50.5L875 47H881.5L884.5 50.5" stroke="#fff" stroke-width="1" fill="none" transform="translate(1 1)"/>
<path d="M874.5 52.5H870.5V60.5H874.5M870.5 56.5H873.5" stroke="#808080" stroke-width="1.3" fill="none" transform="translate(0 0)"/>
<path d="M881.5 52.5H885.5V60.5H881.5M885.5 56.5H882.5" stroke="#808080" stroke-width="1.3" fill="none" transform="translate(0 0)"/>
<path d="M872 50.5L875 47H881.5L884.5 50.5" stroke="#808080" stroke-width="1" fill="none" transform="translate(0 0)"/>
<text x="893" y="58.6" font-size="13" font-weight="bold" font-style="italic" style="font-family:'Liberation Serif',serif" fill="#000" textLength="16" lengthAdjust="spacingAndGlyphs">Aa</text>
<text x="916.4" y="57" font-size="9" fill="#000">.<tspan dx="0.3" dy="-0.6" font-size="9">o</tspan><tspan dx="0.8" dy="0.6" font-size="11" font-weight="bold">p</tspan></text>
<g transform="translate(0 0)"><path d="M15 432L19.6 427.4M15 437L20.6 442.6" stroke="#0000ff" stroke-width="1.1" fill="none"/><path d="M16.6 440.6L19.6 439.2L19 441.8Z" fill="#0000ff" stroke="#0000ff" stroke-width="0.8"/></g>
<g transform="translate(2.5 -355)"><path d="M15 432L19.6 427.4M15 437L20.6 442.6" stroke="#0000ff" stroke-width="1.1" fill="none"/><path d="M16.6 440.6L19.6 439.2L19 441.8Z" fill="#0000ff" stroke="#0000ff" stroke-width="0.8"/></g>
<rect class="ce" x="8" y="102" width="2" height="13" fill="#fff"/>
<rect class="ce" x="10" y="116" width="14" height="2" fill="#fff"/>
<g class="ce"><g transform="translate(0 0)"><rect x="155" y="74" width="13" height="13" fill="#c0c0c0"/><rect x="156" y="75" width="1" height="1" fill="#808080"/><rect x="158" y="75" width="1" height="1" fill="#808080"/><rect x="160" y="75" width="1" height="1" fill="#808080"/><rect x="162" y="75" width="1" height="1" fill="#808080"/><rect x="164" y="75" width="1" height="1" fill="#808080"/><rect x="166" y="75" width="1" height="1" fill="#808080"/><rect x="156" y="77" width="1" height="1" fill="#808080"/><rect x="158" y="77" width="1" height="1" fill="#808080"/><rect x="160" y="77" width="1" height="1" fill="#808080"/><rect x="162" y="77" width="1" height="1" fill="#808080"/><rect x="164" y="77" width="1" height="1" fill="#808080"/><rect x="166" y="77" width="1" height="1" fill="#808080"/><rect x="156" y="79" width="1" height="1" fill="#808080"/><rect x="158" y="79" width="1" height="1" fill="#808080"/><rect x="160" y="79" width="1" height="1" fill="#808080"/><rect x="162" y="79" width="1" height="1" fill="#808080"/><rect x="164" y="79" width="1" height="1" fill="#808080"/><rect x="166" y="79" width="1" height="1" fill="#808080"/><rect x="156" y="81" width="1" height="1" fill="#808080"/><rect x="158" y="81" width="1" height="1" fill="#808080"/><rect x="160" y="81" width="1" height="1" fill="#808080"/><rect x="162" y="81" width="1" height="1" fill="#808080"/><rect x="164" y="81" width="1" height="1" fill="#808080"/><rect x="166" y="81" width="1" height="1" fill="#808080"/><rect x="156" y="83" width="1" height="1" fill="#808080"/><rect x="158" y="83" width="1" height="1" fill="#808080"/><rect x="160" y="83" width="1" height="1" fill="#808080"/><rect x="162" y="83" width="1" height="1" fill="#808080"/><rect x="164" y="83" width="1" height="1" fill="#808080"/><rect x="166" y="83" width="1" height="1" fill="#808080"/><rect x="156" y="85" width="1" height="1" fill="#808080"/><rect x="158" y="85" width="1" height="1" fill="#808080"/><rect x="160" y="85" width="1" height="1" fill="#808080"/><rect x="162" y="85" width="1" height="1" fill="#808080"/><rect x="164" y="85" width="1" height="1" fill="#808080"/><rect x="166" y="85" width="1" height="1" fill="#808080"/><rect x="154" y="74" width="1" height="16" fill="#000"/><rect x="152" y="87" width="16" height="1" fill="#000"/><rect x="152" y="75" width="2" height="1" fill="#000"/><rect x="152" y="77" width="2" height="1" fill="#000"/><rect x="152" y="79" width="2" height="1" fill="#000"/><rect x="152" y="81" width="2" height="1" fill="#000"/><rect x="152" y="83" width="2" height="1" fill="#000"/><rect x="152" y="85" width="2" height="1" fill="#000"/><rect x="157" y="88" width="1" height="2" fill="#000"/><rect x="160" y="88" width="1" height="2" fill="#000"/><rect x="163" y="88" width="1" height="2" fill="#000"/><rect x="166" y="88" width="1" height="2" fill="#000"/></g></g>
<path transform="translate(0 0)" d="M155.3 82.2L158.2 78.9H160.5L162.8 81H164.9L167.6 77.4" stroke="#ff0000" stroke-width="1.7" fill="none"/>
<g class="ce"><g transform="translate(-144 28)"><rect x="155" y="74" width="13" height="13" fill="#c0c0c0"/><rect x="156" y="75" width="1" height="1" fill="#808080"/><rect x="158" y="75" width="1" height="1" fill="#808080"/><rect x="160" y="75" width="1" height="1" fill="#808080"/><rect x="162" y="75" width="1" height="1" fill="#808080"/><rect x="164" y="75" width="1" height="1" fill="#808080"/><rect x="166" y="75" width="1" height="1" fill="#808080"/><rect x="156" y="77" width="1" height="1" fill="#808080"/><rect x="158" y="77" width="1" height="1" fill="#808080"/><rect x="160" y="77" width="1" height="1" fill="#808080"/><rect x="162" y="77" width="1" height="1" fill="#808080"/><rect x="164" y="77" width="1" height="1" fill="#808080"/><rect x="166" y="77" width="1" height="1" fill="#808080"/><rect x="156" y="79" width="1" height="1" fill="#808080"/><rect x="158" y="79" width="1" height="1" fill="#808080"/><rect x="160" y="79" width="1" height="1" fill="#808080"/><rect x="162" y="79" width="1" height="1" fill="#808080"/><rect x="164" y="79" width="1" height="1" fill="#808080"/><rect x="166" y="79" width="1" height="1" fill="#808080"/><rect x="156" y="81" width="1" height="1" fill="#808080"/><rect x="158" y="81" width="1" height="1" fill="#808080"/><rect x="160" y="81" width="1" height="1" fill="#808080"/><rect x="162" y="81" width="1" height="1" fill="#808080"/><rect x="164" y="81" width="1" height="1" fill="#808080"/><rect x="166" y="81" width="1" height="1" fill="#808080"/><rect x="156" y="83" width="1" height="1" fill="#808080"/><rect x="158" y="83" width="1" height="1" fill="#808080"/><rect x="160" y="83" width="1" height="1" fill="#808080"/><rect x="162" y="83" width="1" height="1" fill="#808080"/><rect x="164" y="83" width="1" height="1" fill="#808080"/><rect x="166" y="83" width="1" height="1" fill="#808080"/><rect x="156" y="85" width="1" height="1" fill="#808080"/><rect x="158" y="85" width="1" height="1" fill="#808080"/><rect x="160" y="85" width="1" height="1" fill="#808080"/><rect x="162" y="85" width="1" height="1" fill="#808080"/><rect x="164" y="85" width="1" height="1" fill="#808080"/><rect x="166" y="85" width="1" height="1" fill="#808080"/><rect x="154" y="74" width="1" height="16" fill="#000"/><rect x="152" y="87" width="16" height="1" fill="#000"/><rect x="152" y="75" width="2" height="1" fill="#000"/><rect x="152" y="77" width="2" height="1" fill="#000"/><rect x="152" y="79" width="2" height="1" fill="#000"/><rect x="152" y="81" width="2" height="1" fill="#000"/><rect x="152" y="83" width="2" height="1" fill="#000"/><rect x="152" y="85" width="2" height="1" fill="#000"/><rect x="157" y="88" width="1" height="2" fill="#000"/><rect x="160" y="88" width="1" height="2" fill="#000"/><rect x="163" y="88" width="1" height="2" fill="#000"/><rect x="166" y="88" width="1" height="2" fill="#000"/></g></g>
<path transform="translate(-144 28)" d="M155.3 82.2L158.2 78.9H160.5L162.8 81H164.9L167.6 77.4" stroke="#ff0000" stroke-width="1.7" fill="none"/></g>
<g class="ce">
<rect x="47" y="140" width="954" height="1" fill="#c0c0c0"/>
<rect x="47" y="390" width="954" height="1" fill="#c0c0c0"/>
<rect x="47" y="140" width="1" height="258" fill="#c0c0c0"/>
<rect x="1000" y="140" width="1" height="258" fill="#c0c0c0"/>
<rect x="40" y="140" width="7" height="1" fill="#c0c0c0"/>
<rect x="40" y="165" width="7" height="1" fill="#c0c0c0"/>
<rect x="40" y="190" width="7" height="1" fill="#c0c0c0"/>
<rect x="40" y="215" width="7" height="1" fill="#c0c0c0"/>
<rect x="40" y="240" width="7" height="1" fill="#c0c0c0"/>
<rect x="40" y="265" width="7" height="1" fill="#c0c0c0"/>
<rect x="40" y="290" width="7" height="1" fill="#c0c0c0"/>
<rect x="40" y="315" width="7" height="1" fill="#c0c0c0"/>
<rect x="40" y="340" width="7" height="1" fill="#c0c0c0"/>
<rect x="40" y="365" width="7" height="1" fill="#c0c0c0"/>
<rect x="40" y="390" width="7" height="1" fill="#c0c0c0"/>
<rect x="153" y="390" width="1" height="8" fill="#c0c0c0"/>
<rect x="259" y="390" width="1" height="8" fill="#c0c0c0"/>
<rect x="365" y="390" width="1" height="8" fill="#c0c0c0"/>
<rect x="471" y="390" width="1" height="8" fill="#c0c0c0"/>
<rect x="576" y="390" width="1" height="8" fill="#c0c0c0"/>
<rect x="682" y="390" width="1" height="8" fill="#c0c0c0"/>
<rect x="788" y="390" width="1" height="8" fill="#c0c0c0"/>
<rect x="894" y="390" width="1" height="8" fill="#c0c0c0"/>
</g>
<g font-size="14" fill="#b4b4b4">
<text x="7.6" y="145" textLength="32" lengthAdjust="spacing">5.0W</text>
<text x="7.6" y="170" textLength="32" lengthAdjust="spacing">4.5W</text>
<text x="7.6" y="195" textLength="32" lengthAdjust="spacing">4.0W</text>
<text x="7.6" y="220" textLength="32" lengthAdjust="spacing">3.5W</text>
<text x="7.6" y="245" textLength="32" lengthAdjust="spacing">3.0W</text>
<text x="7.6" y="270" textLength="32" lengthAdjust="spacing">2.5W</text>
<text x="7.6" y="295" textLength="32" lengthAdjust="spacing">2.0W</text>
<text x="7.6" y="320" textLength="32" lengthAdjust="spacing">1.5W</text>
<text x="7.6" y="345" textLength="32" lengthAdjust="spacing">1.0W</text>
<text x="7.6" y="370" textLength="32" lengthAdjust="spacing">0.5W</text>
<text x="7.6" y="395" textLength="32" lengthAdjust="spacing">0.0W</text>
<text x="46.5" y="411" text-anchor="middle">0ms</text>
<text x="152.5" y="411" text-anchor="middle">4ms</text>
<text x="258.5" y="411" text-anchor="middle">8ms</text>
<text x="364.5" y="411" text-anchor="middle">12ms</text>
<text x="470.5" y="411" text-anchor="middle">16ms</text>
<text x="575.5" y="411" text-anchor="middle">20ms</text>
<text x="681.5" y="411" text-anchor="middle">24ms</text>
<text x="787.5" y="411" text-anchor="middle">28ms</text>
<text x="893.5" y="411" text-anchor="middle">32ms</text>
<text x="999.5" y="411" text-anchor="middle">36ms</text>
</g>
<text x="228.6" y="135" font-size="14" fill="#00ff00" textLength="113" lengthAdjust="spacing">V(N002,N001)*I(R3)</text>
<text x="704.6" y="135" font-size="14" fill="#0000ff" textLength="114" lengthAdjust="spacing">V(N002,N004)*I(R2)</text>
<g fill="none" stroke-width="1.05" stroke-linejoin="round">
<polyline stroke="#00ff00" points="62.0,390.0 65.0,389.8 68.0,389.5 71.0,389.2 74.0,388.7 77.0,388.1 80.0,387.4 82.9,386.6 85.9,385.6 88.8,384.6 91.9,383.5 95.1,382.2 98.2,380.9 101.4,379.6 104.5,378.1 107.2,376.9 109.9,375.6 112.7,374.2 115.4,372.7 118.1,371.2 120.8,369.6 123.6,367.9 126.3,366.1 129.1,364.3 131.8,362.5 134.9,360.3 138.0,358.1 141.2,355.9 144.3,353.6 147.4,351.3 150.3,349.2 153.3,347.2 156.2,345.1 159.1,342.9 162.1,340.8 165.0,338.6 168.2,336.0 171.5,333.4 174.8,330.7 178.0,328.0 181.2,325.3 184.5,322.5 187.6,319.7 190.8,316.9 193.9,314.1 197.1,311.2 200.2,308.3 203.4,305.2 206.7,302.1 209.9,299.0 213.2,295.8 216.4,292.7 219.7,289.6 222.6,286.7 225.6,283.9 228.5,281.1 231.4,278.3 234.4,275.5 237.3,272.7 240.3,269.8 243.4,266.8 246.4,263.9 249.5,260.9 252.5,257.9 255.7,254.8 258.9,251.6 262.1,248.4 265.2,245.2 268.4,242.1 271.6,238.9 274.8,235.7 278.0,232.5 281.0,229.5 284.0,226.5 287.0,223.5 290.0,220.5 293.0,217.5 296.0,214.5 299.0,211.6 302.0,208.6 305.0,205.6 307.8,202.8 310.7,200.1 313.5,197.3 316.3,194.5 319.2,191.8 322.0,189.0 325.0,186.1 328.0,183.2 331.0,180.4 334.0,177.5 337.0,174.6 340.0,171.7 342.8,169.0 345.7,166.3 348.5,163.6 351.3,160.9 354.2,158.2 357,155.5"/>
<polyline stroke="#00ff00" points="357,155.5 357.5,390.5 1000,390.5"/>
<polyline stroke="#0000ff" points="48,390.5 357.5,390.5 357.5,155.5"/>
<polyline stroke="#0000ff" points="357.0,155.5 360.0,159.7 363.0,163.8 366.0,168.0 369.0,172.1 372.0,176.2 375.0,180.2 378.0,184.2 381.0,188.2 384.0,192.2 387.0,196.0 390.0,199.8 392.9,203.4 395.8,207.0 398.8,210.4 401.7,213.9 404.6,217.2 407.5,220.5 410.4,223.7 413.3,226.8 416.2,229.9 419.2,233.0 422.1,235.9 425.0,238.8 428.1,241.9 431.2,245.0 434.4,248.0 437.5,250.9 440.6,253.8 443.8,256.7 446.9,259.5 450.0,262.2 453.1,264.9 456.2,267.6 459.4,270.2 462.5,272.7 465.6,275.2 468.8,277.6 471.9,280.0 475.0,282.4 478.0,284.6 481.0,286.7 484.0,288.9 487.0,291.0 490.0,293.1 493.0,295.1 496.0,297.1 499.0,299.0 502.0,301.0 505.0,302.8 508.1,304.7 511.2,306.6 514.4,308.5 517.5,310.3 520.6,312.0 523.8,313.7 526.9,315.4 530.0,317.0 533.1,318.6 536.2,320.2 539.4,321.7 542.5,323.2 545.6,324.6 548.8,326.0 551.9,327.4 555.0,328.8 558.1,330.1 561.2,331.4 564.4,332.7 567.5,333.9 570.6,335.1 573.8,336.3 576.9,337.5 580.0,338.7 583.1,339.9 586.2,341.1 589.4,342.3 592.5,343.5 595.6,344.7 598.8,345.8 601.9,346.9 605.0,348.0 608.1,349.0 611.2,350.0 614.4,351.0 617.5,352.0 620.6,352.9 623.8,353.8 626.9,354.7 630.0,355.6 633.1,356.4 636.2,357.2 639.4,357.9 642.5,358.7 645.6,359.4 648.8,360.1 651.9,360.8 655.0,361.5 658.1,362.2 661.2,362.8 664.4,363.4 667.5,364.0 670.6,364.6 673.8,365.2 676.9,365.8 680.0,366.4 683.1,366.9 686.2,367.5 689.4,368.0 692.5,368.6 695.6,369.1 698.8,369.6 701.9,370.1 705.0,370.6 708.1,371.1 711.2,371.6 714.4,372.0 717.5,372.5 720.6,373.0 723.8,373.4 726.9,373.8 730.0,374.3 733.1,374.7 736.2,375.1 739.4,375.5 742.5,375.9 745.6,376.2 748.8,376.6 751.9,377.0 755.0,377.3 758.1,377.6 761.2,378.0 764.4,378.3 767.5,378.6 770.6,378.9 773.8,379.2 776.9,379.5 780.0,379.8 783.1,380.1 786.2,380.3 789.4,380.6 792.5,380.9 795.6,381.1 798.8,381.4 801.9,381.6 805.0,381.8 808.0,382.1 811.0,382.3 814.0,382.5 817.0,382.7 820.0,382.9 823.0,383.1 826.0,383.4 829.0,383.6 832.0,383.7 835.0,383.9 838.0,384.1 841.0,384.3 844.0,384.5 847.0,384.7 850.0,384.8 853.0,385.0 856.0,385.1 858.9,385.3 861.8,385.4 864.6,385.6 867.5,385.7 870.4,385.8 873.2,385.9 876.1,386.1 879.0,386.2 881.9,386.3 884.8,386.5 887.6,386.6 890.5,386.7 893.4,386.8 896.2,386.9 899.1,387.1 902.0,387.2 905.1,387.3 908.3,387.4 911.4,387.6 914.6,387.7 917.7,387.8 920.9,387.9 924.0,388.1 926.9,388.2 929.8,388.3 932.7,388.3 935.6,388.4 938.4,388.5 941.3,388.6 944.2,388.7 947.1,388.8 950.0,388.9 953.1,388.9 956.3,389.0 959.4,389.1 962.6,389.2 965.7,389.2 968.9,389.3 972.0,389.3 975.1,389.4 978.2,389.4 981.3,389.5 984.4,389.5 987.6,389.6 990.7,389.6 993.8,389.6 996.9,389.7 1000,389.7"/>
</g>
<g class="ce" fill="none" stroke-width="1">
<polyline points="367.5,557 367.5,496.5 417,496.5" stroke="#0000ff"/>
<polyline points="467,496.5 635.5,496.5 635.5,516" stroke="#0000ff"/>
<polyline points="526.5,496.5 526.5,516" stroke="#0000ff"/>
<polyline points="526.5,566 526.5,596" stroke="#0000ff"/>
<polyline points="566,585.5 635.5,585.5 635.5,566" stroke="#0000ff"/>
<polyline points="367.5,605 367.5,704.5 526.5,704.5" stroke="#0000ff"/>
<polyline points="407.5,646 407.5,625.5 417,625.5" stroke="#0000ff"/>
<polyline points="467,625.5 476.5,625.5 476.5,645.5 497,645.5" stroke="#0000ff"/>
<polyline points="407.5,694 407.5,704.5" stroke="#0000ff"/>
<polyline points="526.5,655 526.5,725" stroke="#0000ff"/>
<polyline points="367.5,557 367.5,568.5" stroke="#000080"/>
<polyline points="347,568.5 388,568.5" stroke="#000080"/>
<rect x="357.5" y="573.5" width="20" height="5" stroke="#000080"/>
<polyline points="347,583.5 388,583.5" stroke="#000080"/>
<rect x="357.5" y="588.5" width="20" height="5" stroke="#000080"/>
<polyline points="367.5,594 367.5,605" stroke="#000080"/>
<polyline points="354,561.5 361,561.5" stroke="#000080"/>
<polyline points="357.5,558 357.5,565" stroke="#000080"/>
<polyline points="407.5,646 407.5,650" stroke="#000080"/>
<polyline points="407.5,689 407.5,694" stroke="#000080"/>
<polyline points="402,657.5 413,657.5" stroke="#000080"/>
<polyline points="407.5,652 407.5,663" stroke="#000080"/>
<polyline points="402,682.5 413,682.5" stroke="#000080"/>
<polyline points="417,496.5 422,496.5" stroke="#000080"/>
<polyline points="462,496.5 467,496.5" stroke="#000080"/>
<polyline points="417,625.5 422,625.5" stroke="#000080"/>
<polyline points="462,625.5 467,625.5" stroke="#000080"/>
<polyline points="635.5,516 635.5,521" stroke="#000080"/>
<polyline points="635.5,561 635.5,566" stroke="#000080"/>
<polyline points="529,585.5 538.5,585.5" stroke="#000080"/>
<polyline points="553.5,585.5 566,585.5" stroke="#000080"/>
<polyline points="538.5,576 538.5,596" stroke="#000080"/>
<polyline points="553.5,575 553.5,596" stroke="#000080"/>
<polyline points="526.5,596 526.5,605.5 506,605.5" stroke="#000080"/>
<polyline points="506.5,600 506.5,611" stroke="#000080"/>
<polyline points="506.5,620 506.5,631" stroke="#000080"/>
<polyline points="506.5,640 506.5,651" stroke="#000080"/>
<polyline points="501.5,605 501.5,646" stroke="#000080"/>
<polyline points="497,645.5 501.5,645.5" stroke="#000080"/>
<polyline points="506,625.5 526.5,625.5 526.5,655" stroke="#000080"/>
<polyline points="506,645.5 526.5,645.5" stroke="#000080"/>
<rect x="524" y="494" width="5" height="5" fill="#0000ff"/>
<rect x="524" y="583" width="5" height="5" fill="#0000ff"/>
<rect x="405" y="702" width="5" height="5" fill="#0000ff"/>
<rect x="524" y="702" width="5" height="5" fill="#0000ff"/>
</g>
<g fill="none" stroke-width="1.15" stroke-linejoin="miter">
<polyline points="422,496.5 427,486.5 437,506.5 447,486.5 457,506.5 462,496.5" stroke="#000080"/>
<polyline points="422,625.5 427,615.5 437,635.5 447,615.5 457,635.5 462,625.5" stroke="#000080"/>
<polyline points="635.5,521 645.5,526 625.5,536 645.5,546 625.5,556 635.5,561" stroke="#000080"/>
<polyline points="538.5,576 553.5,585.5 538.5,595.5" stroke="#000080"/>
<polyline points="521.5,622.5 509.5,625.5 521.5,628.5 521.5,622.5" stroke="#000080"/>
<circle cx="407" cy="669" r="19.4" stroke="#000080"/>
<circle cx="520.5" cy="558.5" r="2.2" stroke="#000080"/>
<path stroke="#000080" d="M526.5 516C531 516.5 536.5 520 536.5 526C536.5 530 535 532.5 533 533.7C529 530.4 523 530.6 519.6 533.8C523 537 529 537.1 533 533.7C535.5 535.5 536.5 538.5 536.5 541.3C536.5 544 535.5 547 533 548.8C529 545.5 523 545.7 519.6 548.9C523 552.1 529 552.2 533 548.8C535.5 550.5 536.5 553.5 536.5 556.5C536.5 562 531 565 526.5 565.5"/>
<polyline points="514.5,724.5 538,724.5 526.4,735.5 514.5,724.5" stroke="#0000ff"/>
</g>
<g font-size="14" font-weight="bold" fill="#000">
<text x="516" y="467" textLength="151" lengthAdjust="spacing">.tran 0.036 startup uic</text>
<text x="432" y="483">R3</text>
<text x="436.5" y="519">5</text>
<text x="381.5" y="561" textLength="18" lengthAdjust="spacing">V3</text>
<text x="389.5" y="573" textLength="29" lengthAdjust="spacing">13.5</text>
<text x="388" y="590" textLength="67" lengthAdjust="spacing">Rser=0.01</text>
<text x="432" y="612">R1</text>
<text x="448.5" y="648">1</text>
<text x="427" y="672" textLength="16" lengthAdjust="spacing">V2</text>
<text x="534" y="515" textLength="14.5" lengthAdjust="spacing">L1</text>
<text x="536" y="572" textLength="17" lengthAdjust="spacing">D1</text>
<text x="540" y="608">D</text>
<text x="531" y="620">M1</text>
<text x="531" y="645" textLength="73" lengthAdjust="spacing">IXFX90N30</text>
<text x="647" y="536">R2</text>
</g>
</svg>
</body></html>
